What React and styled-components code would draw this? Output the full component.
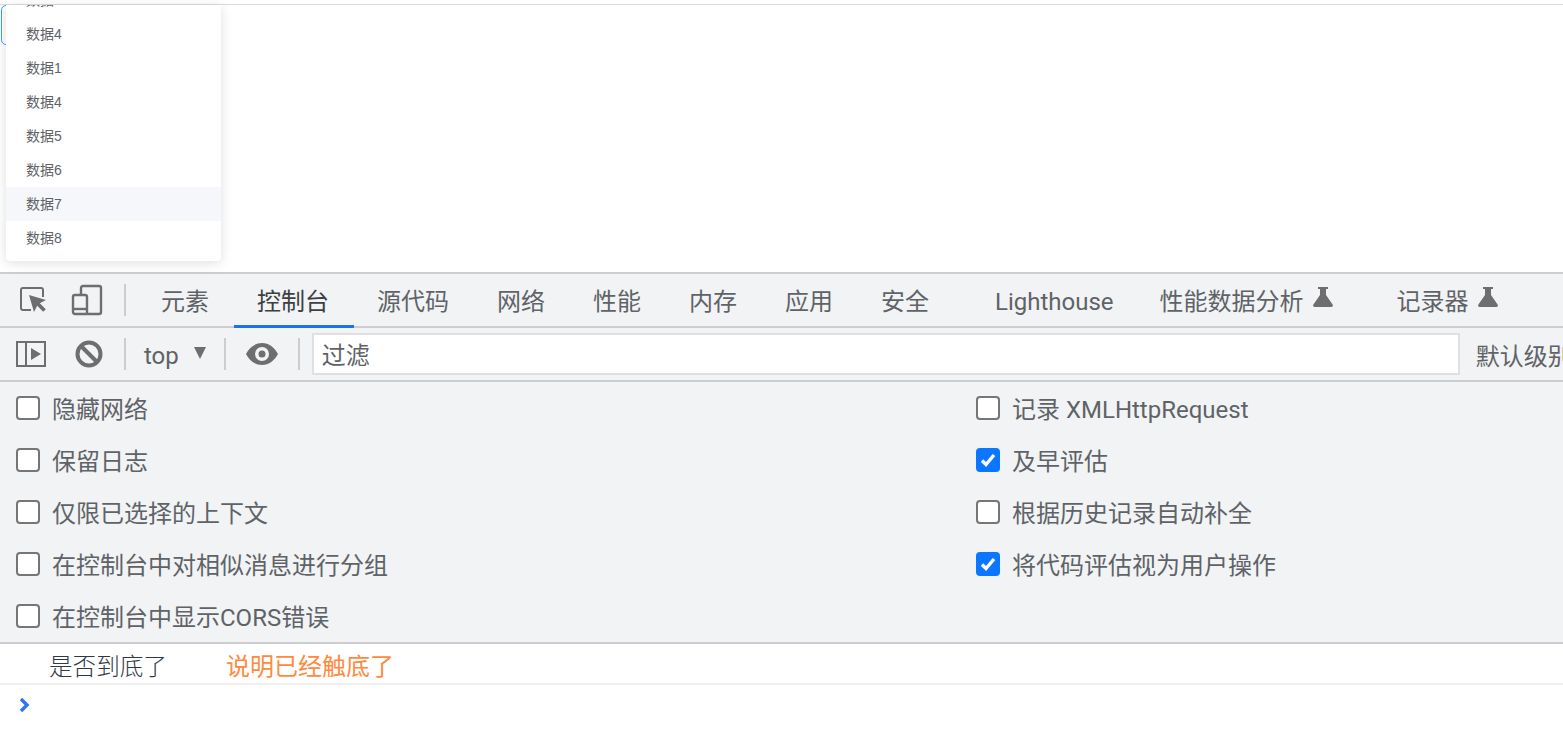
import React from "react";
import styled, { createGlobalStyle } from "styled-components";

const UI_FONT = `"Roboto", "Noto Sans CJK SC", sans-serif`;

const Global = createGlobalStyle`
  html, body { margin: 0; padding: 0; background: #fff; overflow: hidden; }
  body { font-family: ${UI_FONT}; }
`;

const Page = styled.div`
  width: 1563px;
  height: 735px;
  display: flex;
  flex-direction: column;
  overflow: hidden;
`;

const Preview = styled.div`
  position: relative;
  height: 272px;
  flex: none;
  border-top: 1px solid #dcdcdc;
  margin-top: 4px;
  margin-bottom: -4px;
  box-sizing: border-box;
`;

const SelectEdge = styled.div`
  position: absolute;
  left: 1px;
  top: 0;
  width: 30px;
  height: 40px;
  box-sizing: border-box;
  border: 1px solid #409eff;
  border-radius: 5px;
`;

const Dropdown = styled.ul`
  position: absolute;
  left: 6px;
  top: 0;
  width: 215px;
  height: 256px;
  margin: 0;
  padding: 0;
  list-style: none;
  background: #fff;
  border-radius: 0 0 4px 4px;
  box-shadow: 0 2px 12px rgba(0, 0, 0, 0.13);
  overflow: hidden;
`;

const Option = styled.li`
  height: 34px;
  padding-left: 20px;
  font: 14px/34px "Liberation Sans", "Noto Sans CJK SC", sans-serif;
  color: #606266;
  background: ${(p) => (p.$hover ? "#f5f7fa" : "transparent")};
  &:first-child { margin-top: -22px; }
`;

const Bar = styled.div`
  height: 56px;
  flex: none;
  box-sizing: border-box;
  display: flex;
  align-items: center;
  background: #f1f3f4;
  border-top: 2px solid #cbcdd1;
  border-bottom: 2px solid #cbcdd1;
`;

const Toolbar = styled(Bar)`
  height: 54px;
  border-top: 0;
`;

const IconSlot = styled.span`
  display: flex;
  align-items: center;
  justify-content: center;
  flex: none;
  width: ${(p) => p.$w}px;
  margin-left: ${(p) => p.$ml || 0}px;
  color: #6e6e6e;
`;

const Divider = styled.span`
  width: 2px;
  height: 32px;
  flex: none;
  background: #cbcdd1;
  margin: 0 ${(p) => p.$mr ?? 11}px 0 ${(p) => p.$ml ?? 11}px;
`;

const Tab = styled.div`
  position: relative;
  display: flex;
  align-items: center;
  box-sizing: border-box;
  height: 100%;
  padding: 4px ${(p) => p.$pr ?? 24}px 0 24px;
  margin-left: ${(p) => p.$ml || 0}px;
  font-size: 24px;
  line-height: 32px;
  white-space: nowrap;
  color: ${(p) => (p.$active ? "#3c4043" : "#5f6368")};
  &::after {
    content: "";
    display: ${(p) => (p.$active ? "block" : "none")};
    position: absolute;
    left: 1px;
    right: -1px;
    bottom: -2px;
    height: 3px;
    background: #1a73e8;
  }
`;

const Flask = styled.svg`
  width: 22px;
  height: 22px;
  margin-left: 8px;
  margin-top: -10px;
  fill: #6e6e6e;
`;

const ContextLabel = styled.span`
  font-size: 24px;
  color: #5f6368;
  margin: 3px 0 0 7px;
`;

const Caret = styled.span`
  width: 0;
  height: 0;
  margin: -2px 18px 0 15px;
  border-left: 6.5px solid transparent;
  border-right: 6.5px solid transparent;
  border-top: 12px solid #6e6e6e;
`;

const Filter = styled.div`
  width: 1148px;
  height: 42px;
  flex: none;
  box-sizing: border-box;
  padding-left: 8px;
  background: #fff;
  border: 2px solid #e0e0e0;
  font-size: 24px;
  line-height: 42px;
  color: #5f6368;
`;

const Levels = styled.span`
  margin-left: 16px;
  font-size: 24px;
  color: #5f6368;
  white-space: nowrap;
`;

const Settings = styled.div`
  height: 262px;
  flex: none;
  box-sizing: border-box;
  display: grid;
  grid-template-columns: 960px 1fr;
  grid-auto-rows: 52px;
  background: #f1f3f4;
  border-bottom: 2px solid #cbcdd1;
`;

const Setting = styled.label`
  display: flex;
  align-items: center;
  gap: 12px;
  padding-left: 16px;
  font-size: 24px;
  color: #5f6368;
  white-space: nowrap;
`;

const SettingText = styled.span`
  margin-top: -2px;
`;

const Box = styled.span`
  width: 24px;
  height: 24px;
  flex: none;
  box-sizing: border-box;
  display: flex;
  align-items: center;
  justify-content: center;
  border-radius: 4px;
  background: ${(p) => (p.$on ? "#0b76ff" : "#fff")};
  border: ${(p) => (p.$on ? "0" : "2px solid #767676")};
`;

const LogRow = styled.div`
  height: 41px;
  flex: none;
  box-sizing: border-box;
  display: flex;
  align-items: center;
  padding: 2px 0 0 49px;
  border-bottom: 2px solid #f0f0f0;
`;

const LogLabel = styled.span`
  width: 177px;
  font: 300 23.6px "Liberation Serif", "Noto Sans CJK SC", serif;
  color: #303942;
`;

const LogValue = styled.span`
  font-size: 24px;
  color: #ff8a3d;
`;

const Prompt = styled.div`
  height: 40px;
  padding-left: 19px;
  display: flex;
  align-items: center;
  color: #2f74f0;
`;

const FlaskIcon = () => (
  <Flask viewBox="0 0 22 22">
    <path d="M6 1h10v2h-2v6l6.600 9.400c.8 1.200 0 2.600-1.400 2.600H2.800c-1.400 0-2.200-1.400-1.400-2.600L8 9V3H6z" />
  </Flask>
);

const OPTIONS = ["数据3", "数据4", "数据1", "数据4", "数据5", "数据6", "数据7", "数据8"];
const TABS = ["元素", "控制台", "源代码", "网络", "性能", "内存", "应用", "安全"];
const SETTINGS = [
  ["隐藏网络", false],
  ["记录 XMLHttpRequest", false],
  ["保留日志", false],
  ["及早评估", true],
  ["仅限已选择的上下文", false],
  ["根据历史记录自动补全", false],
  ["在控制台中对相似消息进行分组", false],
  ["将代码评估视为用户操作", true],
  ["在控制台中显示CORS错误", false],
];

export default function App() {
  return (
    <Page>
      <Global />
      <Preview>
        <SelectEdge />
        <Dropdown>
          {OPTIONS.map((o, i) => (
            <Option key={i} $hover={i === 6}>{o}</Option>
          ))}
        </Dropdown>
      </Preview>
      <Bar>
        <IconSlot $w={32} $ml={18}>
          <svg width="30" height="30" viewBox="0 0 30 30" fill="none">
            <path d="M12 25H4a2 2 0 0 1-2-2V5a2 2 0 0 1 2-2h18a2 2 0 0 1 2 2v7" stroke="#6e6e6e" strokeWidth="2" />
            <path d="M10 10l5 17 3.200-6.200 6 6 2.600-2.600-6-6L27 15z" fill="#6e6e6e" />
          </svg>
        </IconSlot>
        <IconSlot $w={32} $ml={21}>
          <svg width="32" height="32" viewBox="0 0 32 32" fill="none" stroke="#6e6e6e" strokeWidth="2.4">
            <path d="M10 11V4a2 2 0 0 1 2-2h16a2 2 0 0 1 2 2v24a2 2 0 0 1-2 2H4a2 2 0 0 1-2-2V13a2 2 0 0 1 2-2h10a2 2 0 0 1 2 2v17" />
            <path d="M2 25h14" />
          </svg>
        </IconSlot>
        <Divider $ml={21} $mr={11} />
        {TABS.map((t, i) => (
          <Tab key={t} $active={i === 1}>{t}</Tab>
        ))}
        <Tab $ml={18} $pr={22}>Lighthouse</Tab>
        <Tab $pr={0}>性能数据分析<FlaskIcon /></Tab>
        <Tab $ml={39} $pr={0}>记录器<FlaskIcon /></Tab>
      </Bar>
      <Toolbar>
        <IconSlot $w={30} $ml={16}>
          <svg width="30" height="26" viewBox="0 0 30 26" fill="none" stroke="#6e6e6e" strokeWidth="2">
            <rect x="1" y="1" width="28" height="24" />
            <path d="M10 1v24" />
            <path d="M15 7l10 6-10 6z" fill="#6e6e6e" stroke="none" />
          </svg>
        </IconSlot>
        <IconSlot $w={28} $ml={29}>
          <svg width="28" height="28" viewBox="0 0 28 28" fill="none" stroke="#6e6e6e" strokeWidth="4">
            <circle cx="14" cy="14" r="11.500" />
            <path d="M6 6l16 16" />
          </svg>
        </IconSlot>
        <Divider $ml={21} $mr={11} />
        <ContextLabel>top</ContextLabel>
        <Caret />
        <Divider $ml={0} $mr={20} />
        <IconSlot $w={32}>
          <svg width="32" height="22" viewBox="0 0 32 22">
            <path fillRule="evenodd" fill="#6e6e6e" d="M16 0C9 0 3.500 4.500 0 11c3.500 6.500 9 11 16 11s12.500-4.500 16-11C28.500 4.500 23 0 16 0zm0 18a7 7 0 1 1 0-14 7 7 0 0 1 0 14zm0-3.500a3.500 3.500 0 1 0 0-7 3.500 3.500 0 0 0 0 7z" />
          </svg>
        </IconSlot>
        <Divider $ml={20} $mr={12} />
        <Filter>过滤</Filter>
        <Levels>默认级别</Levels>
      </Toolbar>
      <Settings>
        {SETTINGS.map(([label, on]) => (
          <Setting key={label}>
            <Box $on={on}>
              {on && (
                <svg width="16" height="14" viewBox="0 0 16 14" fill="none">
                  <path d="M2 7.500l4 4 8-9.500" stroke="#fff" strokeWidth="3.400" />
                </svg>
              )}
            </Box>
            <SettingText>{label}</SettingText>
          </Setting>
        ))}
      </Settings>
      <LogRow>
        <LogLabel>是否到底了</LogLabel>
        <LogValue>说明已经触底了</LogValue>
      </LogRow>
      <Prompt>
        <svg width="12" height="16" viewBox="0 0 12 16" fill="none">
          <path d="M2 2l6 6-6 6" stroke="currentColor" strokeWidth="3.400" />
        </svg>
      </Prompt>
    </Page>
  );
}
